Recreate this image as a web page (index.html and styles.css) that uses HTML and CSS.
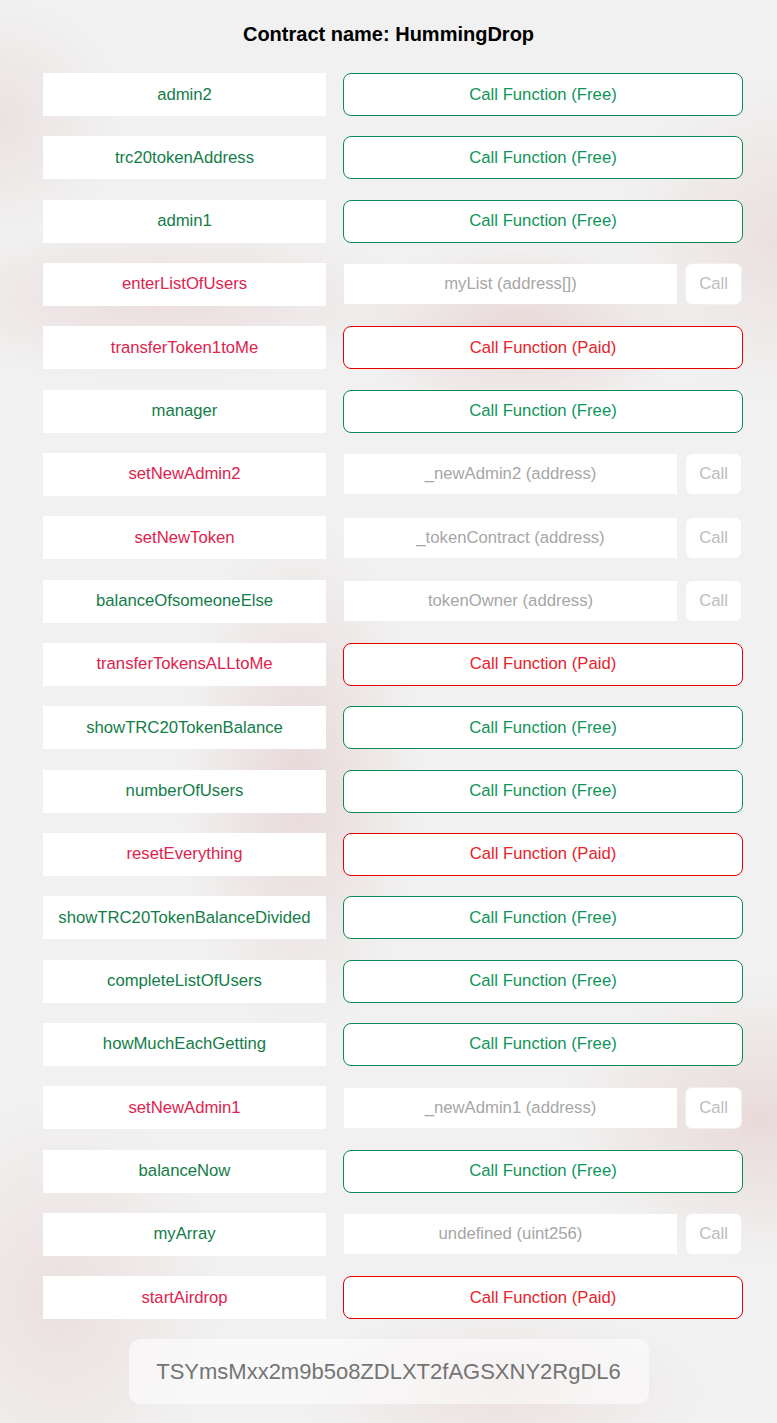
FILE: index.html
```html
<!DOCTYPE html>
<html>
<head>
<meta charset="utf-8">
<link rel="stylesheet" href="styles.css">
</head>
<body>
<div class="page">
  <h1 class="title">Contract name: HummingDrop</h1>
  <div class="rows">
    <div class="label free">admin2</div>
    <button class="fn free">Call Function (Free)</button>

    <div class="label free">trc20tokenAddress</div>
    <button class="fn free">Call Function (Free)</button>

    <div class="label free">admin1</div>
    <button class="fn free">Call Function (Free)</button>

    <div class="label paid">enterListOfUsers</div>
    <div class="arg"><div class="input">myList (address[])</div><div class="call">Call</div></div>

    <div class="label paid">transferToken1toMe</div>
    <button class="fn paid">Call Function (Paid)</button>

    <div class="label free">manager</div>
    <button class="fn free">Call Function (Free)</button>

    <div class="label paid">setNewAdmin2</div>
    <div class="arg"><div class="input">_newAdmin2 (address)</div><div class="call">Call</div></div>

    <div class="label paid">setNewToken</div>
    <div class="arg"><div class="input">_tokenContract (address)</div><div class="call">Call</div></div>

    <div class="label free">balanceOfsomeoneElse</div>
    <div class="arg"><div class="input">tokenOwner (address)</div><div class="call">Call</div></div>

    <div class="label paid">transferTokensALLtoMe</div>
    <button class="fn paid">Call Function (Paid)</button>

    <div class="label free">showTRC20TokenBalance</div>
    <button class="fn free">Call Function (Free)</button>

    <div class="label free">numberOfUsers</div>
    <button class="fn free">Call Function (Free)</button>

    <div class="label paid">resetEverything</div>
    <button class="fn paid">Call Function (Paid)</button>

    <div class="label free">showTRC20TokenBalanceDivided</div>
    <button class="fn free">Call Function (Free)</button>

    <div class="label free">completeListOfUsers</div>
    <button class="fn free">Call Function (Free)</button>

    <div class="label free">howMuchEachGetting</div>
    <button class="fn free">Call Function (Free)</button>

    <div class="label paid">setNewAdmin1</div>
    <div class="arg"><div class="input">_newAdmin1 (address)</div><div class="call">Call</div></div>

    <div class="label free">balanceNow</div>
    <button class="fn free">Call Function (Free)</button>

    <div class="label free">myArray</div>
    <div class="arg"><div class="input">undefined (uint256)</div><div class="call">Call</div></div>

    <div class="label paid">startAirdrop</div>
    <button class="fn paid">Call Function (Paid)</button>
  </div>
  <div class="footer">
    <div class="address">TSYmsMxx2m9b5o8ZDLXT2fAGSXNY2RgDL6</div>
  </div>
</div>
</body>
</html>
```

FILE: styles.css
```css
html, body {
  margin: 0;
  padding: 0;
}
body {
  width: 777px;
  height: 1423px;
  overflow: hidden;
  font-family: "Liberation Sans", Arial, sans-serif;
  background-color: #f1f1f1;
  background-image:
    radial-gradient(ellipse 120px 260px at 300px 780px, rgba(232, 214, 214, 0.9), rgba(232, 214, 214, 0) 100%),
    radial-gradient(ellipse 170px 90px at 520px 330px, rgba(232, 212, 212, 0.9), rgba(232, 212, 212, 0) 100%),
    radial-gradient(ellipse 260px 80px at 160px 300px, rgba(234, 218, 218, 0.85), rgba(234, 218, 218, 0) 100%),
    radial-gradient(ellipse 200px 140px at 760px 1120px, rgba(232, 214, 214, 0.85), rgba(232, 214, 214, 0) 100%),
    radial-gradient(ellipse 160px 200px at 60px 1300px, rgba(234, 218, 218, 0.75), rgba(234, 218, 218, 0) 100%),
    radial-gradient(ellipse 200px 80px at 500px 1390px, rgba(234, 218, 218, 0.75), rgba(234, 218, 218, 0) 100%),
    radial-gradient(ellipse 120px 120px at 0px 120px, rgba(234, 222, 222, 0.8), rgba(234, 222, 222, 0) 100%),
    radial-gradient(ellipse 160px 160px at 777px 240px, rgba(234, 220, 220, 0.8), rgba(234, 220, 220, 0) 100%);
}
.page {
  display: flex;
  flex-direction: column;
}
.title {
  margin: 0;
  padding-top: 23px;
  height: 50px;
  box-sizing: border-box;
  text-align: center;
  font-size: 20px;
  line-height: 22px;
  font-weight: bold;
  color: #000;
}
.rows {
  display: grid;
  grid-template-columns: 283px 400px;
  grid-auto-rows: 43px;
  column-gap: 17px;
  row-gap: 20.33px;
  padding-left: 43px;
  margin-top: 23px;
}
.label {
  background: #fff;
  display: flex;
  align-items: center;
  justify-content: center;
  font-size: 16.7px;
}
.label.free { color: #137d48; }
.label.paid { color: #e0234e; }
.fn {
  margin: 0;
  height: 43px;
  background: #fff;
  border-radius: 8px;
  font-family: "Liberation Sans", Arial, sans-serif;
  font-size: 16.7px;
  cursor: pointer;
  padding: 0;
}
.fn.free {
  border: 1px solid #0b8a55;
  color: #0f9559;
}
.fn.paid {
  border: 1px solid #e60000;
  color: #e8222a;
}
.arg {
  display: flex;
  align-items: center;
  gap: 8px;
  padding-left: 1px;
}
.input {
  width: 333px;
  height: 40px;
  background: #fff;
  display: flex;
  align-items: center;
  justify-content: center;
  font-size: 16.7px;
  color: #a6a6a6;
}
.call {
  width: 57px;
  height: 42px;
  box-sizing: border-box;
  background: #fff;
  border: 1px solid #f0f0f0;
  border-radius: 7px;
  display: flex;
  align-items: center;
  justify-content: center;
  font-size: 16.7px;
  color: #bdbdbd;
}
.footer {
  display: flex;
  justify-content: center;
  margin-top: 20px;
}
.address {
  width: 520px;
  height: 65px;
  box-sizing: border-box;
  background: rgba(255, 255, 255, 0.55);
  border-radius: 12px;
  display: flex;
  align-items: center;
  justify-content: center;
  font-size: 22px;
  color: #747474;
}
```
